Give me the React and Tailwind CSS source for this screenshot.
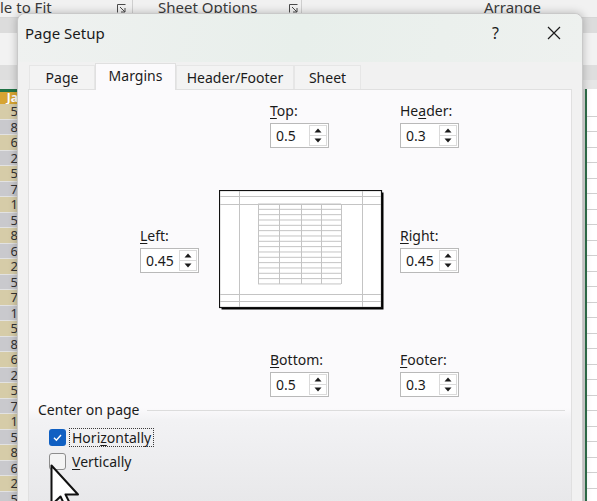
import React from 'react';

const digits = [5, 8, 6, 2, 5, 7, 1];
const rows = Array.from({ length: 26 }, (_, i) => digits[i % 7]);

const Launcher = () => (
    <svg width="11" height="11" viewBox="0 0 11 11" fill="none" stroke="#4a4a4a" strokeWidth="1">
        <path d="M1.5 9.5V1.5H9.5" />
        <path d="M4 4L9 9" />
        <path d="M9 5V9H5" />
    </svg>
);

const Triangle = ({ down }) => (
    <svg width="8" height="5" viewBox="0 0 8 5">
        <path d={down ? 'M0.5 0.5H7.5L4 4.5Z' : 'M4 0.5L7.5 4.5H0.5Z'} fill="#1a1a1a" />
    </svg>
);

const Spin = ({ value }) => (
    <div className="flex h-[25px] w-[59px] border border-[#b9b9b9] bg-white">
        <div className="flex-1 pl-[5px] text-[14px] leading-[23px] text-[#1b1b1b]">{value}</div>
        <div className="my-[1px] mr-[1px] flex w-[18px] flex-col border border-[#dadada] bg-white">
            <div className="flex flex-1 items-center justify-center border-b border-[#dadada]">
                <Triangle />
            </div>
            <div className="flex flex-1 items-center justify-center">
                <Triangle down />
            </div>
        </div>
    </div>
);

const Field = ({ pre = '', u, post, value }) => (
    <div className="flex w-[59px] flex-col">
        <div className="mb-[3px] whitespace-nowrap text-[14px] leading-[18px] text-[#1b1b1b]">
            {pre}<span className="underline underline-offset-2">{u}</span>{post}
        </div>
        <Spin value={value} />
    </div>
);

const Preview = () => {
    const rowLines = Array.from({ length: 16 }, (_, i) => 14 + i * 5.33);
    return (
        <svg width="165" height="120" viewBox="0 0 165 120" className="shrink-0">
            <rect x="2.5" y="2.5" width="162" height="117" fill="#000" />
            <rect x="0.5" y="0.5" width="162" height="117" fill="#fff" stroke="#111" strokeWidth="1.2" />
            <g stroke="#c4c4c4" strokeWidth="1">
                <line x1="1" y1="6.5" x2="162" y2="6.5" />
                <line x1="1" y1="14.5" x2="162" y2="14.5" />
                <line x1="1" y1="104.5" x2="162" y2="104.5" />
                <line x1="1" y1="111.5" x2="162" y2="111.5" />
                <line x1="20.5" y1="1" x2="20.5" y2="117" />
                <line x1="143.5" y1="1" x2="143.5" y2="117" />
                {rowLines.map((y, i) => (
                    <line key={i} x1="39" y1={y} x2="122" y2={y} />
                ))}
                {[39.5, 60.5, 82.5, 102.5, 122.5].map((x, i) => (
                    <line key={i} x1={x} y1="14" x2={x} y2="94" />
                ))}
            </g>
        </svg>
    );
};

const Tab = ({ label, width, active }) => (
    <div
        className={`flex items-center justify-center border border-b-0 text-[14px] ${
            active
                ? 'relative z-10 -mb-px h-[27px] border-[#e0e0e0] bg-[#fbfafc] pb-[3px] text-[#1b1b1b]'
                : 'h-[24px] border-[#e6e6e6] bg-[#f3f3f3] text-[#1b1b1b]'
        }`}
        style={{ width }}
    >
        {label}
    </div>
);

export default function App() {
    return (
        <div
            className="relative h-[501px] w-[597px] overflow-hidden bg-white"
            style={{ fontFamily: '"Noto Sans", "Open Sans", sans-serif' }}
        >
            {/* excel behind */}
            <div className="flex h-[17px] items-center overflow-hidden bg-[#f1f1f1] text-[15px] leading-[17px] text-[#3a3a3a]">
                <div className="-mt-[3px] w-[116px]">le to Fit</div>
                <Launcher />
                <div className="ml-[5px] h-[17px] w-px bg-[#cfcfcf]" />
                <div className="-mt-[3px] ml-[25px] w-[130px]">Sheet Options</div>
                <Launcher />
                <div className="ml-[2px] h-[17px] w-px bg-[#cfcfcf]" />
                <div className="-mt-[3px] ml-[182px]">Arrange</div>
            </div>
            <div className="h-[16px] border-t border-[#d6d6d6] bg-[#dcdcdc]" />
            <div className="h-[32px] bg-[#f2f2f2]" />
            <div className="h-[15px] bg-[#dedede]" />
            <div className="h-[9px] bg-[#e6e6e6]" />
            <div className="flex">
                <div className="w-[18px]">
                    <div className="h-[3px] bg-[#217346]" />
                    <div className="h-[12px] overflow-hidden bg-[#d6a431] text-right text-[12px] font-bold leading-[12px] text-white">Ja</div>
                    {rows.map((d, i) => (
                        <div
                            key={i}
                            className={`h-[15.5px] overflow-hidden border-b border-[#e2e2e2] text-right text-[13px] leading-[14px] text-[#333] ${
                                i % 2 === 0 ? 'bg-[#d6cca8]' : 'bg-[#c9c9cd]'
                            }`}
                        >
                            {d}
                        </div>
                    ))}
                </div>
                <div className="flex-1" />
                <div className="flex w-[14px]">
                    <div className="w-[2px] bg-[#d8d8d8]" />
                    <div className="w-[2px] bg-[#2f6e4a]" />
                    <div className="flex-1 pt-[12px]">
                        {rows.map((_, i) => (
                            <div key={i} className="h-[15.5px] border-b border-[#d0d0d0] bg-white" />
                        ))}
                    </div>
                </div>
            </div>

            {/* page setup dialog */}
            <div className="absolute left-[17px] top-[13px] flex h-[500px] w-[566px] flex-col rounded-t-[8px] border border-[#c9c9c9] bg-[#f1f1f1] shadow-[0_0_8px_rgba(0,0,0,0.25)]">
                <div className="flex h-[48px] items-start rounded-t-[8px] bg-[linear-gradient(100deg,#eff1f0_0%,#e8efeb_50%,#eef1ef_100%)] pl-[7px] pt-[8px] text-[#1b1b1b]">
                    <div className="text-[15px] leading-[22px]">Page Setup</div>
                    <div className="ml-auto mr-[48px] text-[16px] leading-[22px]">?</div>
                    <svg width="14" height="14" viewBox="0 0 14 14" className="mr-[21px] mt-[4px]" stroke="#1b1b1b" strokeWidth="1.2">
                        <path d="M1 1L13 13M13 1L1 13" />
                    </svg>
                </div>
                <div className="flex h-[27px] items-end pl-[11px]">
                    <Tab label="Page" width={66} />
                    <Tab label="Margins" width={81} active />
                    <Tab label="Header/Footer" width={118} />
                    <Tab label="Sheet" width={67} />
                </div>
                <div className="mx-[10px] flex-1 border border-[#e0e0e0] bg-[linear-gradient(to_bottom,#fbfafc_0px,#fbfafc_318px,#f2f2f4_330px,#e7e7e9_100%)]">
                    <div className="flex gap-[71px] pl-[241px] pt-[12px]">
                        <Field u="T" post="op:" value="0.5" />
                        <Field pre="He" u="a" post="der:" value="0.3" />
                    </div>
                    <div className="mt-[42px] flex items-center pl-[111px]">
                        <Field u="L" post="eft:" value="0.45" />
                        <div className="ml-[20px]">
                            <Preview />
                        </div>
                        <div className="ml-[16px]">
                            <Field u="R" post="ight:" value="0.45" />
                        </div>
                    </div>
                    <div className="mt-[41px] flex gap-[71px] pl-[241px]">
                        <Field u="B" post="ottom:" value="0.5" />
                        <Field u="F" post="ooter:" value="0.3" />
                    </div>
                    <div className="mt-[4px] flex items-center pl-[9px] pr-[6px]">
                        <div className="text-[14px] leading-[18px] text-[#1b1b1b]">Center on page</div>
                        <div className="ml-[7px] h-px flex-1 bg-[#dcdcdc]" />
                    </div>
                    <div className="mt-[8px] flex h-[20px] items-center pl-[20px]">
                        <div className="flex h-[17px] w-[17px] items-center justify-center rounded-[3px] bg-[#0f5fc2]">
                            <svg width="11" height="11" viewBox="0 0 11 11" fill="none" stroke="#fff" strokeWidth="1.4">
                                <path d="M2 5.8L4.4 8.2L9 3" />
                            </svg>
                        </div>
                        <div className="ml-[3px] border border-dotted border-[#3a3a3a] px-[2px] text-[14px] leading-[17px] text-[#1b1b1b]">
                            Hori<span className="underline underline-offset-2">z</span>ontally
                        </div>
                    </div>
                    <div className="mt-[4px] flex h-[20px] items-center pl-[20px]">
                        <div className="h-[17px] w-[17px] rounded-[3px] border border-[#8d8d8d] bg-[#f4f4f4]" />
                        <div className="ml-[3px] border border-transparent px-[2px] text-[14px] leading-[17px] text-[#1b1b1b]">
                            <span className="underline underline-offset-2">V</span>ertically
                        </div>
                    </div>
                </div>
            </div>

            {/* mouse pointer */}
            <svg className="absolute left-[50px] top-[464px]" width="36" height="48" viewBox="0 0 36 48">
                <path
                    d="M1.5 1.5V41L10.5 32.5L17 46L22 43.5L15.5 30.5H28Z"
                    fill="#fff"
                    stroke="#111"
                    strokeWidth="2"
                    strokeLinejoin="round"
                />
            </svg>
        </div>
    );
}
